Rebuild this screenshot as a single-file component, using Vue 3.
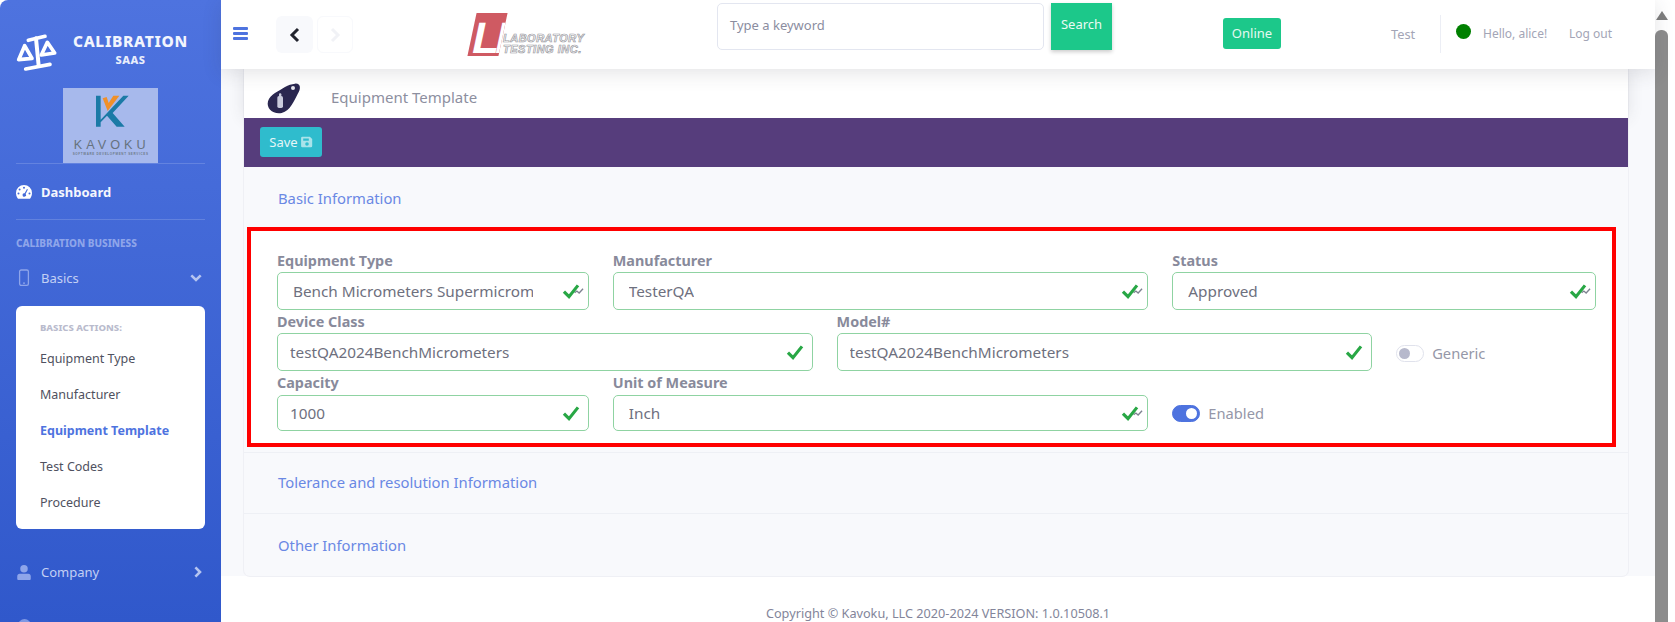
<script setup>
const actions = ['Equipment Type', 'Manufacturer', 'Equipment Template', 'Test Codes', 'Procedure']
const fields = [
  { label: 'Equipment Type', value: 'Bench Micrometers Supermicrometer', span: 3, select: true, clip: true },
  { label: 'Manufacturer', value: 'TesterQA', span: 5, select: true },
  { label: 'Status', value: 'Approved', span: 4, select: true },
  { label: 'Device Class', value: 'testQA2024BenchMicrometers', span: 5 },
  { label: 'Model#', value: 'testQA2024BenchMicrometers', span: 5 },
  { toggle: 'Generic', on: false, span: 2 },
  { label: 'Capacity', value: '1000', span: 3, last: true },
  { label: 'Unit of Measure', value: 'Inch', span: 5, select: true, last: true },
  { toggle: 'Enabled', on: true, span: 4, last: true }
]
</script>

<template>
  <div class="page">
    <aside class="sidebar">
      <div class="brand">
        <svg class="scale" viewBox="0 0 180 165" width="60" height="55" fill="none" stroke="#fff" stroke-linecap="round" stroke-linejoin="round">
          <path d="M55 46 L105 34" stroke-width="11" />
          <path d="M78 40 L86 122" stroke-width="12" />
          <path d="M47 132 L120 118" stroke-width="11" />
          <path d="M44 62 L26 104 L66 100 Z" stroke-width="11" />
          <path d="M112 52 L94 90 L134 84 Z" stroke-width="11" />
        </svg>
        <div class="brand-text">
          <div class="brand-top">CALIBRATION</div>
          <div class="brand-sub">SAAS</div>
        </div>
      </div>
      <div class="company-logo">
        <svg viewBox="9 9 285 225" width="95" height="75">
          <path d="M108 32 H122 V104 L190 32 H206 L158 84 L194 125 H170 L141 92 L122 112 V125 H108 Z" fill="#1b7aa6" />
          <path d="M128 40 L143 78 L178 32 H160 L146 54 L140 36 Z" fill="#f0902a" />
          <text x="155" y="192" text-anchor="middle" class="kavoku">KAVOKU</text>
          <text x="152" y="211" text-anchor="middle" class="kavoku-sub">SOFTWARE DEVELOPMENT SERVICES</text>
        </svg>
      </div>
      <div class="rule"></div>
      <div class="nav-row dash">
        <svg class="nav-icon" viewBox="0 0 16 14" width="16" height="14">
          <path fill="#fff" fill-rule="evenodd" d="M8 0a8 8 0 0 1 8 8c0 2-.6 3.8-1.6 5.2-.3.4-.8.6-1.3.6H2.9c-.5 0-1-.2-1.3-.6A8.6 8.6 0 0 1 0 8a8 8 0 0 1 8-8ZM8 1.8a1 1 0 1 0 0 2 1 1 0 0 0 0-2ZM3.6 3.6a1 1 0 1 0 0 2 1 1 0 0 0 0-2ZM2.5 7.6a1 1 0 1 0 0 2 1 1 0 0 0 0-2ZM13.5 7.6a1 1 0 1 0 0 2 1 1 0 0 0 0-2ZM11 4 8.6 8.3a1.7 1.7 0 1 0 1 .6L11.9 4.5Z" />
        </svg>
        <span>Dashboard</span>
      </div>
      <div class="rule"></div>
      <div class="side-heading">CALIBRATION BUSINESS</div>
      <div class="nav-row faded basics">
        <svg class="nav-icon" viewBox="0 0 16 18" width="16" height="18" fill="none" stroke="#8ea5ea" stroke-width="1.3">
          <rect x="3.6" y="1" width="8.8" height="15.4" rx="1.6" />
          <path d="M7 14.2h2" />
        </svg>
        <span>Basics</span>
        <svg class="chev" viewBox="0 0 12 8" width="12" height="8" fill="none" stroke="#b5c4f0" stroke-width="2.6"><path d="M1.3 1.4 6 6l4.7-4.6" /></svg>
      </div>
      <div class="submenu">
        <div class="sub-heading">BASICS ACTIONS:</div>
        <div v-for="a in actions" :key="a" class="sub-item" :class="{ active: a === 'Equipment Template' }">{{ a }}</div>
      </div>
      <div class="nav-row faded company">
        <svg class="nav-icon" viewBox="0 0 16 16" width="16" height="15"><path fill="#8ea5ea" d="M8 0a4 4 0 1 1 0 8 4 4 0 0 1 0-8ZM3.4 9.2h9.2c1.6 0 2.6 1.2 2.6 2.7V15c0 .6-.4 1-1 1H1.8c-.6 0-1-.4-1-1v-3.1c0-1.5 1-2.7 2.6-2.7Z" /></svg>
        <span>Company</span>
        <svg class="chev" viewBox="0 0 8 12" width="8" height="12" fill="none" stroke="#b5c4f0" stroke-width="2.6"><path d="M1.4 1.3 6 6l-4.6 4.7" /></svg>
      </div>
      <div class="peek"></div>
    </aside>

    <div class="main">
      <header class="topbar">
        <div class="burger"><i></i><i></i><i></i></div>
        <div class="nav-btn back">
          <svg viewBox="0 0 12 16" width="12" height="16" fill="none" stroke="#22242e" stroke-width="3"><path d="M9 2 3 8l6 6" /></svg>
        </div>
        <div class="nav-btn next">
          <svg viewBox="0 0 12 16" width="12" height="16" fill="none" stroke="#f1f2f6" stroke-width="3"><path d="M3 2l6 6-6 6" /></svg>
        </div>
        <div class="lti">
          <div class="lti-mark"><span>LI</span></div>
          <div class="lti-name"><div>LABORATORY</div><div>TESTING INC.</div></div>
        </div>
        <div class="search-box">Type a keyword</div>
        <div class="search-btn">Search</div>
        <div class="online">Online</div>
        <div class="test">Test</div>
        <div class="divider"></div>
        <div class="dot"></div>
        <div class="hello">Hello, alice!</div>
        <div class="logout">Log out</div>
      </header>

      <div class="content">
        <section class="card">
          <div class="title-strip">
            <svg class="blob" viewBox="0 0 144 120" width="48" height="40">
              <path fill="#2a2750" d="M105 17C122 15 124 32 113 48 102 68 92 98 65 105 40 110 18 92 24 70 30 48 60 38 75 27 85 21 95 18 105 17Z" />
              <circle cx="99" cy="30" r="6" fill="#e6e6ee" />
              <rect x="52" y="54" width="17" height="36" rx="5" fill="#c9cbdc" />
              <rect x="57" y="46" width="7" height="10" rx="3" fill="#c9cbdc" />
            </svg>
            <span>Equipment Template</span>
          </div>
          <div class="purple">
            <div class="save">Save
              <svg viewBox="0 0 12 12" width="12" height="12"><path fill="#a9e3ea" fill-rule="evenodd" d="M1.3 0.8h7.6L11.2 3v7a1.2 1.2 0 0 1-1.2 1.2H1.3A1.2 1.2 0 0 1 .1 10V2A1.2 1.2 0 0 1 1.3.8ZM2.2 2.4v2.4h5.6V2.4ZM6 6.2a1.8 1.8 0 1 0 0 3.6 1.8 1.8 0 0 0 0-3.6Z" /></svg>
            </div>
          </div>
          <div class="acc-head first">Basic Information</div>
          <div class="highlight">
            <div class="form-grid">
              <div v-for="f in fields" :key="f.label || f.toggle" class="cell" :class="[`s${f.span}`, { last: f.last }]">
                <template v-if="f.toggle">
                  <div class="toggle-wrap">
                    <div class="switch" :class="{ on: f.on }"><b></b></div>
                    <span>{{ f.toggle }}</span>
                  </div>
                </template>
                <template v-else>
                  <label>{{ f.label }}</label>
                  <div class="field" :class="{ sel: f.select }">
                    <span class="val" :class="{ clip: f.clip }">{{ f.value }}</span>
                    <svg class="check" viewBox="0 0 20 16" width="23" height="18" fill="none">
                      <path v-if="f.select" d="M11 9.5 13 8l2 1.8L18.5 6" stroke="#7d8290" stroke-width="1.2" />
                      <path d="M1.5 8.5 6 13 14 3" stroke="#28a745" stroke-width="2.8" />
                    </svg>
                  </div>
                </template>
              </div>
            </div>
          </div>
          <div class="acc-head line tol">Tolerance and resolution Information</div>
          <div class="acc-head line other">Other Information</div>
        </section>
      </div>
      <footer class="foot">Copyright © Kavoku, LLC 2020-2024 VERSION: 1.0.10508.1</footer>
    </div>

    <div class="scrollbar">
      <div class="arrow"></div>
      <div class="thumb"></div>
    </div>
  </div>
</template>

<style>
html, body { margin: 0; overflow: hidden; background: #fff; }
</style>

<style scoped>
.page {
  display: flex;
  height: 622px;
  overflow: hidden;
  font-family: "Noto Sans", "Liberation Sans", sans-serif;
  background: #fff;
}
.sidebar {
  width: 221px;
  flex: none;
  background: linear-gradient(180deg, #4e73df 0%, #3058cb 100%);
  border-top-left-radius: 8px;
  color: #fff;
  overflow: hidden;
}
.brand { display: flex; height: 88px; }
.scale { margin: 25px 0 0 10px; flex: none; }
.brand-text { margin-left: 3px; width: 115px; text-align: center; padding-top: 31px; }
.brand-top { font-size: 15.5px; line-height: 20px; font-weight: 800; letter-spacing: .7px; color: #f2f5fd; white-space: nowrap; }
.brand-sub { font-size: 11px; line-height: 18px; font-weight: 800; color: #e8edfb; letter-spacing: .5px; }
.company-logo { width: 95px; height: 75px; margin-left: 63px; background: #a7b9ec; }
.company-logo svg { display: block; }
.kavoku { font: 400 38px "Liberation Sans", sans-serif; letter-spacing: 12px; fill: #66727f; }
.kavoku-sub { font: 700 9px "Liberation Sans", sans-serif; letter-spacing: 2px; fill: #6e7a8a; }
.rule { height: 1px; margin: 0 16px; background: rgba(255, 255, 255, .16); }
.nav-row { display: flex; align-items: center; padding: 0 19px 0 16px; font-size: 13px; }
.nav-row > span { margin-left: 9px; }
.nav-icon { flex: none; }
.dash { height: 55px; font-weight: 700; color: #f4f6fd; }
.faded { height: 28px; color: #c3d0f4; }
.chev { margin-left: auto; flex: none; }
.side-heading { height: 44px; line-height: 46px; padding-left: 16px; font-size: 10px; font-weight: 800; color: #8ea5ea; white-space: nowrap; }
.submenu {
  margin: 14px 16px 0;
  height: 223px;
  box-sizing: border-box;
  background: #fff;
  border-radius: 6px;
  padding: 12px 0 0 24px;
}
.sub-heading { height: 23px; line-height: 20px; font-size: 9.5px; font-weight: 800; color: #b9bbcd; white-space: nowrap; }
.sub-item { height: 36px; line-height: 36px; font-size: 12.5px; color: #4f5160; white-space: nowrap; }
.sub-item.active { color: #4e73df; font-weight: 700; }
.company { margin-top: 29px; }
.peek { width: 13px; height: 13px; border-radius: 50%; margin: 33px 0 0 18px; background: #7f98e4; }

.main { width: 1434px; flex: none; display: flex; flex-direction: column; }
.topbar {
  height: 69px;
  flex: none;
  display: flex;
  align-items: flex-start;
  background: #fff;
  box-shadow: 0 4px 18px rgba(58, 59, 69, .14);
  position: relative;
  z-index: 2;
  box-sizing: border-box;
  padding-left: 12px;
  font-size: 12px;
  color: #a3a5b6;
}
.burger { width: 15px; margin-top: 27px; display: flex; flex-direction: column; gap: 2.6px; flex: none; }
.burger i { display: block; height: 2.6px; background: #4e73df; border-radius: 1px; }
.nav-btn { width: 37px; height: 37px; margin-top: 16px; display: flex; align-items: center; justify-content: center; border-radius: 6px; flex: none; }
.back { margin-left: 28px; background: #f8f9fc; }
.next { margin-left: 4px; width: 36px; border: 1px solid #f8f9fc; box-sizing: border-box; }
.lti { margin: 12px 0 0 112px; width: 125px; height: 45px; flex: none; display: flex; }
.lti-mark {
  width: 31px;
  height: 43px;
  margin: 1px 0 0 7px;
  flex: none;
  background: #cf5a62;
  transform: skewX(-12deg);
  overflow: hidden;
  display: flex;
  align-items: flex-end;
  box-sizing: border-box;
  padding: 0 0 1px 2px;
}
.lti-mark span {
  font-family: "Liberation Sans", sans-serif;
  font-weight: 700;
  font-size: 44px;
  line-height: 35px;
  letter-spacing: -4px;
  color: #fff;
  white-space: nowrap;
}
.lti-name {
  margin: 21px 0 0 0;
  font: italic 700 11px/11px "Liberation Sans", sans-serif;
  color: #fff;
  -webkit-text-stroke: .7px #9a9a9f;
  letter-spacing: .5px;
  white-space: nowrap;
}
.search-box {
  width: 327px;
  height: 47px;
  margin: 3px 0 0 127px;
  box-sizing: border-box;
  border: 1px solid #e3e6f0;
  border-radius: 5px;
  padding-left: 12px;
  line-height: 43px;
  font-size: 13px;
  color: #8b8d9f;
  flex: none;
}
.search-btn {
  width: 61px;
  height: 47px;
  margin: 3px 0 0 7px;
  background: #1cc88a;
  color: #eafaf3;
  text-align: center;
  line-height: 43px;
  font-size: 13px;
  box-shadow: 0 2px 4px rgba(0, 0, 0, .2);
  flex: none;
}
.online {
  width: 58px;
  height: 31px;
  margin: 18px 0 0 111px;
  background: #1cc88a;
  color: #e5f9f1;
  text-align: center;
  line-height: 30px;
  font-size: 13px;
  border-radius: 3px;
  flex: none;
}
.test { width: 49px; margin: 25px 0 0 110px; line-height: 18px; font-size: 12.8px; flex: none; }
.divider { width: 1px; height: 38px; margin-top: 15px; background: #eceef5; flex: none; }
.dot { width: 15px; height: 15px; margin: 24px 0 0 15px; border-radius: 50%; background: #008000; flex: none; }
.hello { width: 65px; margin: 25px 0 0 12px; line-height: 18px; white-space: nowrap; flex: none; }
.logout { margin: 25px 0 0 21px; line-height: 18px; white-space: nowrap; flex: none; }

.content { height: 507px; flex: none; background: #f8f9fc; padding: 0 27px 0 23px; box-sizing: border-box; }
.card { background: #f8f9fc; height: 507px; border-radius: 0 0 6px 6px; box-shadow: 0 0 0 1px #eff0f5; }
.title-strip {
  height: 49px;
  background: #fff;
  display: flex;
  box-shadow: 0 0 16px rgba(58, 59, 69, .12);
  font-size: 15px;
  color: #8d8f9f;
  position: relative;
}
.title-strip span { margin: 18px 0 0 23px; line-height: 20px; }
.blob { margin: 9px 0 0 16px; flex: none; }
.purple { height: 49px; background: #563d7c; padding: 9px 0 0 16px; box-sizing: border-box; position: relative; }
.save {
  width: 62px;
  height: 30px;
  background: #2fbccd;
  border-radius: 3px;
  color: #e4f6f8;
  font-size: 13px;
  line-height: 28px;
  display: flex;
  justify-content: center;
  align-items: center;
  gap: 3px;
}
.acc-head { padding-left: 34px; color: #6a88e4; font-size: 14.8px; }
.first { height: 60px; line-height: 63px; }
.line { border-top: 1px solid #eef0f5; box-sizing: border-box; }
.tol { height: 61px; line-height: 59px; }
.other { height: 63px; line-height: 62px; }
.highlight {
  margin: 0 12px 5px 3px;
  border: 4px solid #f00;
  background: #fff;
  height: 220px;
  box-sizing: border-box;
  padding: 18px 16px 0 26px;
}
.form-grid { display: grid; grid-template-columns: repeat(12, 1fr); column-gap: 24px; }
.s2 { grid-column: span 2; }
.s3 { grid-column: span 3; }
.s4 { grid-column: span 4; }
.s5 { grid-column: span 5; }
.cell { min-width: 0; display: flex; flex-direction: column; justify-content: flex-end; }
.cell label { height: 23px; line-height: 23px; font-size: 14.4px; font-weight: 700; color: #888a9b; white-space: nowrap; }
.last label { height: 24px; line-height: 24px; }
.field {
  height: 38px;
  box-sizing: border-box;
  border: 1px solid #8fd3a2;
  border-radius: 5px;
  display: flex;
  align-items: center;
  padding-left: 12px;
  font-size: 15.3px;
  color: #6e707e;
  position: relative;
}
.last .field { height: 36px; }
.field.sel { padding-left: 15px; }
.val { white-space: nowrap; overflow: hidden; }
.val.clip { width: 240px; }
.check { position: absolute; right: 3px; top: 50%; transform: translateY(-50%); }
.field:not(.sel) .check { right: 3px; }
.toggle-wrap { display: flex; align-items: center; height: 36px; gap: 8px; font-size: 14.7px; color: #9597a8; margin-bottom: 0; }
.switch {
  width: 28px;
  height: 17px;
  box-sizing: border-box;
  border: 1px solid #e0e2ec;
  border-radius: 9px;
  background: #fff;
  position: relative;
  flex: none;
}
.switch b { position: absolute; left: 2px; top: 2px; width: 11px; height: 11px; border-radius: 50%; background: #b7b9cc; }
.switch.on { background: #4e73df; border-color: #4e73df; }
.switch.on b { left: 13px; background: #fff; }
.foot { flex: 1; text-align: center; font-size: 12.7px; color: #83859a; padding-top: 28px; box-sizing: border-box; line-height: 18px; }

.scrollbar { width: 20px; flex: none; background: #fff; position: relative; }
.arrow { margin: 11px 0 0 1px; width: 0; height: 0; border-left: 6.5px solid transparent; border-right: 6.5px solid transparent; border-bottom: 9px solid #7e7e7e; }
.thumb { margin-top: 10px; width: 13px; height: 600px; background: #8c8c8c; border-radius: 6px 6px 0 0; }
</style>
